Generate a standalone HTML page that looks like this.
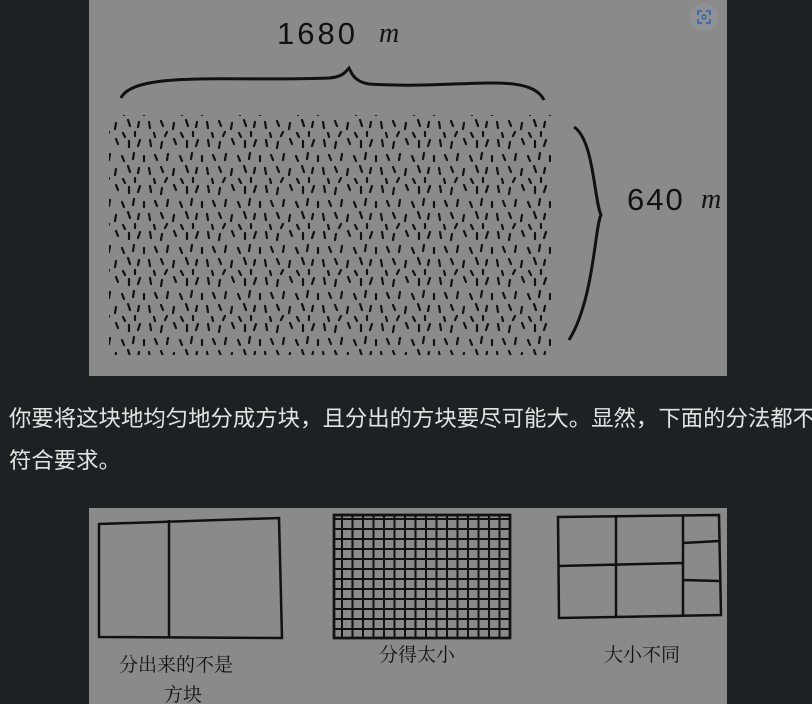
<!DOCTYPE html>
<html><head><meta charset="utf-8"><style>
html,body{margin:0;padding:0;background:#1f2023;width:812px;height:704px;overflow:hidden}
.p{position:absolute;left:9px;top:398px;width:812px;color:#e3e3e3;font:22.4px/42px "Liberation Sans","Noto Sans CJK SC",sans-serif;white-space:nowrap}
svg{position:absolute}
</style></head><body>
<svg style="left:89px;top:0" width="638" height="376" viewBox="0 0 638 376">
<defs>
<pattern id="d" width="58" height="46" patternUnits="userSpaceOnUse">
<g stroke="#111" stroke-width="2.2" stroke-linecap="round">
<path d="M3 2l1 6M15 4l-1 6M27 1l2 5M40 3l0 6M51 2l-2 6M8 17l2 5M21 16l-1 6M33 18l2 5M45 15l-1 6M55 18l0 5M2 30l1 6M14 29l2 5M27 31l-1 6M39 28l2 6M50 30l-1 5M7 41l1 4M20 40l-2 4M34 41l2 4M46 40l0 4"/>
</g></pattern>
<pattern id="g" width="10.5" height="10" patternUnits="userSpaceOnUse">
<path d="M0 1H10.5M1 0V10" stroke="#111" stroke-width="2"/></pattern>
</defs>
<rect width="638" height="376" fill="#8a8a8a"/>
<text x="188" y="44" font-family="Liberation Sans" font-size="31" letter-spacing="3" fill="#111">1680</text>
<text x="290" y="42" font-family="Liberation Serif" font-style="italic" font-size="28" fill="#111">m</text>
<path d="M32 98C45 70 150 82 240 78C255 77 258 70 260 68C262 72 265 82 280 84C370 90 440 70 455 100" fill="none" stroke="#111" stroke-width="3"/>
<rect x="20" y="115" width="442" height="240" fill="url(#d)"/>
<path d="M485 127C505 140 505 200 512 215C506 225 505 300 480 340" fill="none" stroke="#111" stroke-width="3"/>
<text x="538" y="210" font-family="Liberation Sans" font-size="31" letter-spacing="2" fill="#111">640</text>
<text x="612" y="208" font-family="Liberation Serif" font-style="italic" font-size="28" fill="#111">m</text>
<circle cx="615" cy="17" r="14" fill="#8f9194"/>
<path d="M609 15v-4h4M617 11h4v4M621 19v4h-4M613 23h-4v-4" fill="none" stroke="#2a5fae" stroke-width="1.5"/>
<circle cx="615" cy="17" r="2" fill="none" stroke="#2a5fae" stroke-width="1.2"/>
</svg>
<div class="p">你要将这块地均匀地分成方块，且分出的方块要尽可能大。显然，下面的分法都不<br>符合要求。</div>
<svg style="left:89px;top:508px" width="638" height="196" viewBox="0 0 638 196">
<rect width="638" height="196" fill="#8a8a8a"/>
<g fill="none" stroke="#111" stroke-width="2.5">
<path d="M10 16L190 10L193 130L10 129Z M80 12V130"/>
<rect x="245" y="7" width="176" height="123" fill="url(#g)"/>
<rect x="245" y="7" width="176" height="123"/>
<path d="M469 9L630 7L632 107L470 110Z M527 8V109 M594 8V108 M469 58L594 55 M594 35L630 33 M594 72L630 73"/>
</g>
<g font-family="Noto Serif CJK SC,serif" font-size="19" fill="#111">
<text x="30" y="163">分出来的不是</text><text x="75" y="193">方块</text>
<text x="290" y="153">分得太小</text>
<text x="515" y="153">大小不同</text>
</g>
</svg>
</body></html>
